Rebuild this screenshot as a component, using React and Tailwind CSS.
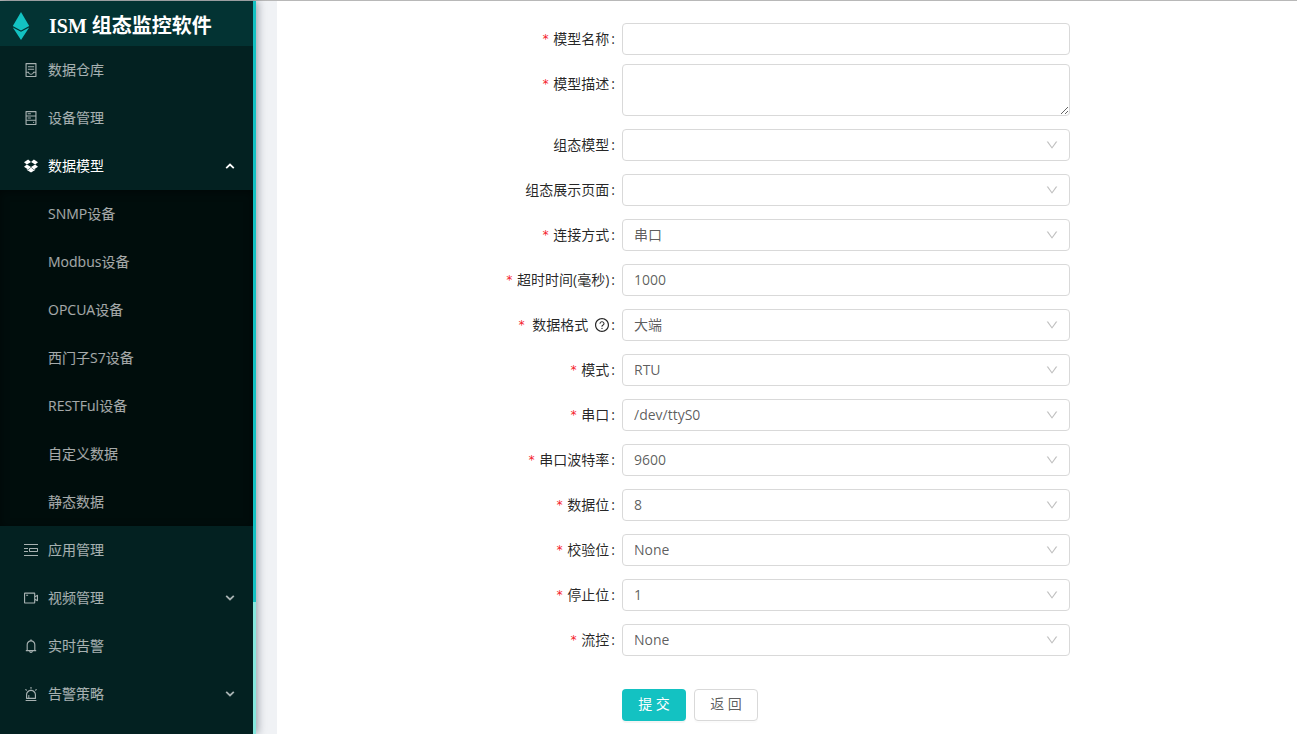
import React, { useState } from "react";
import {
  AiOutlineAlert,
  AiOutlineBell,
  AiOutlineContainer,
  AiOutlineDown,
  AiOutlineDropbox,
  AiOutlineHdd,
  AiOutlineQuestionCircle,
  AiOutlineVideoCamera,
} from "react-icons/ai";
import clsx from "clsx";

const modelMenu = ["SNMP设备", "Modbus设备", "OPCUA设备", "西门子S7设备", "RESTFul设备", "自定义数据", "静态数据"];

const fields = [
  { id: "name", label: "模型名称", type: "input", required: true, value: "" },
  { id: "desc", label: "模型描述", type: "textarea", required: true, value: "" },
  { id: "scada", label: "组态模型", type: "select", value: "" },
  { id: "page", label: "组态展示页面", type: "select", value: "" },
  { id: "link", label: "连接方式", type: "select", required: true, value: "串口" },
  { id: "timeout", label: "超时时间(毫秒)", type: "input", required: true, value: "1000" },
  { id: "format", label: "数据格式", type: "select", required: true, value: "大端", help: true },
  { id: "mode", label: "模式", type: "select", required: true, value: "RTU" },
  { id: "port", label: "串口", type: "select", required: true, value: "/dev/ttyS0" },
  { id: "baud", label: "串口波特率", type: "select", required: true, value: "9600" },
  { id: "dataBits", label: "数据位", type: "select", required: true, value: "8" },
  { id: "parity", label: "校验位", type: "select", required: true, value: "None" },
  { id: "stopBits", label: "停止位", type: "select", required: true, value: "1" },
  { id: "flow", label: "流控", type: "select", required: true, value: "None" },
];

const controlClass =
  "block w-full rounded border border-[#d9d9d9] bg-white px-[11px] text-sm text-black/65 outline-none focus:border-[#13c2c2]";

function Logo() {
  return (
    <svg viewBox="0 0 18 28" className="h-7 w-[18px]" fill="#13c2c2">
      <path d="M9 0L17.2 14L9 18.4L0.8 14Z" />
      <path d="M0.8 15.4L9 19.8L17.2 15.4L9 28Z" />
    </svg>
  );
}

function AppsIcon({ className }) {
  return (
    <svg viewBox="0 0 16 16" className={className} fill="none" stroke="currentColor">
      <path d="M1 2.5H15M1 13.5H15M1 6.5H5M1 9.5H5M6.5 6.5H14.5V9.5H6.5Z" />
    </svg>
  );
}

function Arrow({ up }) {
  return (
    <svg viewBox="0 0 10 6" className={clsx("ml-auto h-[6px] w-[10px]", up && "rotate-180")} fill="none" stroke="currentColor" strokeWidth="1.8">
      <path d="M1.2 0.8L5 4.4L8.8 0.8" />
    </svg>
  );
}

function MenuItem({ icon: Icon, label }) {
  return (
    <a href="#" className="flex h-12 items-center gap-[9px] pl-[23px] pr-[18px] text-sm text-white/65 hover:text-white">
      <Icon className="size-4" />
      {label}
    </a>
  );
}

function MenuGroup({ icon: Icon, label, open, onToggle, children }) {
  return (
    <div>
      <button
        type="button"
        onClick={onToggle}
        aria-expanded={open}
        className={clsx(
          "flex h-12 w-full items-center gap-[9px] pl-[23px] pr-[18px] text-sm hover:text-white",
          open ? "text-white" : "text-white/65"
        )}
      >
        <Icon className="size-4" />
        {label}
        <Arrow up={open} />
      </button>
      {open && children}
    </div>
  );
}

function Sidebar() {
  const [open, setOpen] = useState(true);

  return (
    <aside className="z-10 flex w-64 shrink-0 bg-[#032121] shadow-[2px_0_8px_rgba(0,21,41,0.35)]">
      <div className="min-w-0 flex-1">
        <div className="flex h-[45px] items-center gap-[19px] bg-[#033333] pl-3 pt-1">
          <Logo />
          <h1 className="font-['Liberation_Serif','Noto_Sans_CJK_SC',serif] text-xl font-bold text-white">ISM 组态监控软件</h1>
        </div>
        <nav>
          <MenuItem icon={AiOutlineContainer} label="数据仓库" />
          <MenuItem icon={AiOutlineHdd} label="设备管理" />
          <MenuGroup icon={AiOutlineDropbox} label="数据模型" open={open} onToggle={() => setOpen(!open)}>
            <div className="bg-[#000d0c] shadow-[inset_0_2px_8px_rgba(0,0,0,0.45)]">
              {modelMenu.map(name => (
                <a key={name} href="#" className="flex h-12 items-center pl-12 text-sm text-white/65 hover:text-white">
                  {name}
                </a>
              ))}
            </div>
          </MenuGroup>
          <MenuItem icon={AppsIcon} label="应用管理" />
          <MenuGroup icon={AiOutlineVideoCamera} label="视频管理" />
          <MenuItem icon={AiOutlineBell} label="实时告警" />
          <MenuGroup icon={AiOutlineAlert} label="告警策略" />
        </nav>
      </div>
      {/* scroll track and thumb */}
      <div className="w-[3px] bg-[#87e8de]">
        <div className="h-[82%] bg-[#13c2c2]" />
      </div>
    </aside>
  );
}

function Control({ field }) {
  if (field.type === "textarea") {
    return <textarea id={field.id} defaultValue={field.value} className={clsx(controlClass, "h-[52px] resize-y py-1")} />;
  }
  if (field.type === "input") {
    return <input id={field.id} defaultValue={field.value} className={clsx(controlClass, "h-8 pb-[2px]")} />;
  }
  return (
    <div className="relative">
      <select id={field.id} defaultValue={field.value} className={clsx(controlClass, "h-8 appearance-none")}>
        <option>{field.value}</option>
      </select>
      <AiOutlineDown className="pointer-events-none absolute right-[11px] top-[9px] size-[14px] text-black/25" />
    </div>
  );
}

function FormRow({ field }) {
  return (
    <div className={clsx("grid grid-cols-[345fr_448fr_227fr]", field.id === "name" ? "mb-[9px]" : "mb-[13px]")}>
      <label
        htmlFor={field.id}
        className={clsx("flex items-center justify-end pr-[7px] text-sm text-black/85", field.type === "textarea" ? "h-10" : "h-8")}
      >
        {field.required && (
          <span className={clsx("font-['DejaVu_Sans_Mono',monospace] text-xs text-[#f5222d]", field.help ? "mr-[7px]" : "mr-1")}>*</span>
        )}
        {field.label}
        {field.help && <AiOutlineQuestionCircle className="ml-[6px] size-4" />}
        <span className={field.help ? "ml-px" : "ml-[2px]"}>:</span>
      </label>
      <Control field={field} />
    </div>
  );
}

export default function App() {
  return (
    <div className="flex min-h-screen border-t border-[#b8b8b8] bg-[#f0f2f5] font-['Open_Sans','Noto_Sans_CJK_SC',sans-serif]">
      <Sidebar />
      <main className="ml-[21px] min-w-0 flex-1 bg-white pt-[22px]">
        <form onSubmit={e => e.preventDefault()}>
          {fields.map(f => (
            <FormRow key={f.id} field={f} />
          ))}
          <div className="mt-[33px] grid grid-cols-[345fr_675fr]">
            <div className="col-start-2 flex gap-2 pb-3">
              <button type="submit" className="h-8 w-16 rounded bg-[#13c2c2] pb-[2px] text-sm text-white shadow-[0_2px_0_rgba(0,0,0,0.045)]">
                提 交
              </button>
              <button type="button" className="h-8 w-16 rounded border border-[#d9d9d9] bg-white pb-[2px] text-sm text-black/65 shadow-[0_2px_0_rgba(0,0,0,0.016)]">
                返 回
              </button>
            </div>
          </div>
        </form>
      </main>
    </div>
  );
}
